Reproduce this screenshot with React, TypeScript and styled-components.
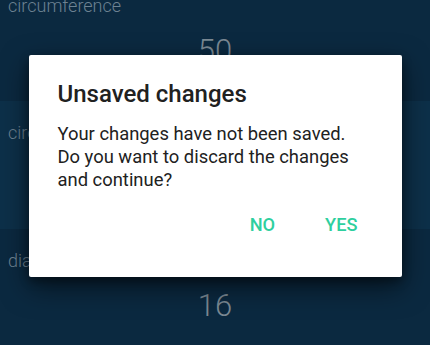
import React from "react";
import styled, { createGlobalStyle } from "styled-components";

const Global = createGlobalStyle`
  html, body { margin: 0; padding: 0; }
  body {
    width: 430px;
    height: 345px;
    overflow: hidden;
    background: #0b2940;
    font-family: Roboto, "Noto Sans", Arial, sans-serif;
  }
`;

const Screen = styled.div`
  position: relative;
  width: 430px;
  height: 345px;
  overflow: hidden;
  background: #0b2940;
`;

const List = styled.div`
  display: flex;
  flex-direction: column;
  margin-top: -26.5px;
`;

const Row = styled.div<{ $alt?: boolean }>`
  height: 127.5px;
  box-sizing: border-box;
  padding: 21.3px 8px 0;
  display: flex;
  flex-direction: column;
  background: ${(p) => (p.$alt ? "#0d3049" : "#0b2940")};
`;

const Label = styled.div`
  font-size: 18px;
  line-height: 22px;
  font-weight: 300;
  color: #6d8292;
`;

const Value = styled.div`
  margin-top: 16.7px;
  font-size: 31px;
  line-height: 36px;
  font-weight: 300;
  color: #7b8994;
  text-align: center;
`;

const Overlay = styled.div`
  position: absolute;
  inset: 0;
  display: flex;
  justify-content: center;
  align-items: flex-start;
  padding-top: 55px;
`;

const Dialog = styled.div`
  width: 373px;
  height: 222px;
  box-sizing: border-box;
  background: #ffffff;
  border-radius: 2px;
  box-shadow: 0 10px 28px rgba(0, 0, 0, 0.55), 0 4px 10px rgba(0, 0, 0, 0.35);
  padding: 25px 0 0 29px;
  display: flex;
  flex-direction: column;
`;

const Title = styled.div`
  font-size: 24px;
  line-height: 28px;
  font-weight: 500;
  color: #212121;
`;

const Body = styled.div`
  margin-top: 14px;
  font-size: 18.4px;
  line-height: 23px;
  font-weight: 400;
  color: #212121;
`;

const Actions = styled.div`
  margin-top: 14.6px;
  display: flex;
  justify-content: flex-end;
  gap: 10px;
  padding-right: 24px;
`;

const ActionButton = styled.button`
  border: none;
  background: transparent;
  padding: 8px 20px;
  font-family: inherit;
  font-size: 18.2px;
  line-height: 22px;
  font-weight: 500;
  color: #2ecf9e;
  cursor: pointer;
`;

const rows = [
  { label: "circumference", value: "50" },
  { label: "circumference", value: "157" },
  { label: "diameter", value: "16" },
];

export default function App() {
  return (
    <>
      <Global />
      <Screen>
        <List>
          {rows.map((r, i) => (
            <Row key={i} $alt={i % 2 === 1}>
              <Label>{r.label}</Label>
              <Value>{r.value}</Value>
            </Row>
          ))}
        </List>
        <Overlay>
          <Dialog>
            <Title>Unsaved changes</Title>
            <Body>
              Your changes have not been saved.
              <br />
              Do you want to discard the changes
              <br />
              and continue?
            </Body>
            <Actions>
              <ActionButton>NO</ActionButton>
              <ActionButton>YES</ActionButton>
            </Actions>
          </Dialog>
        </Overlay>
      </Screen>
    </>
  );
}
